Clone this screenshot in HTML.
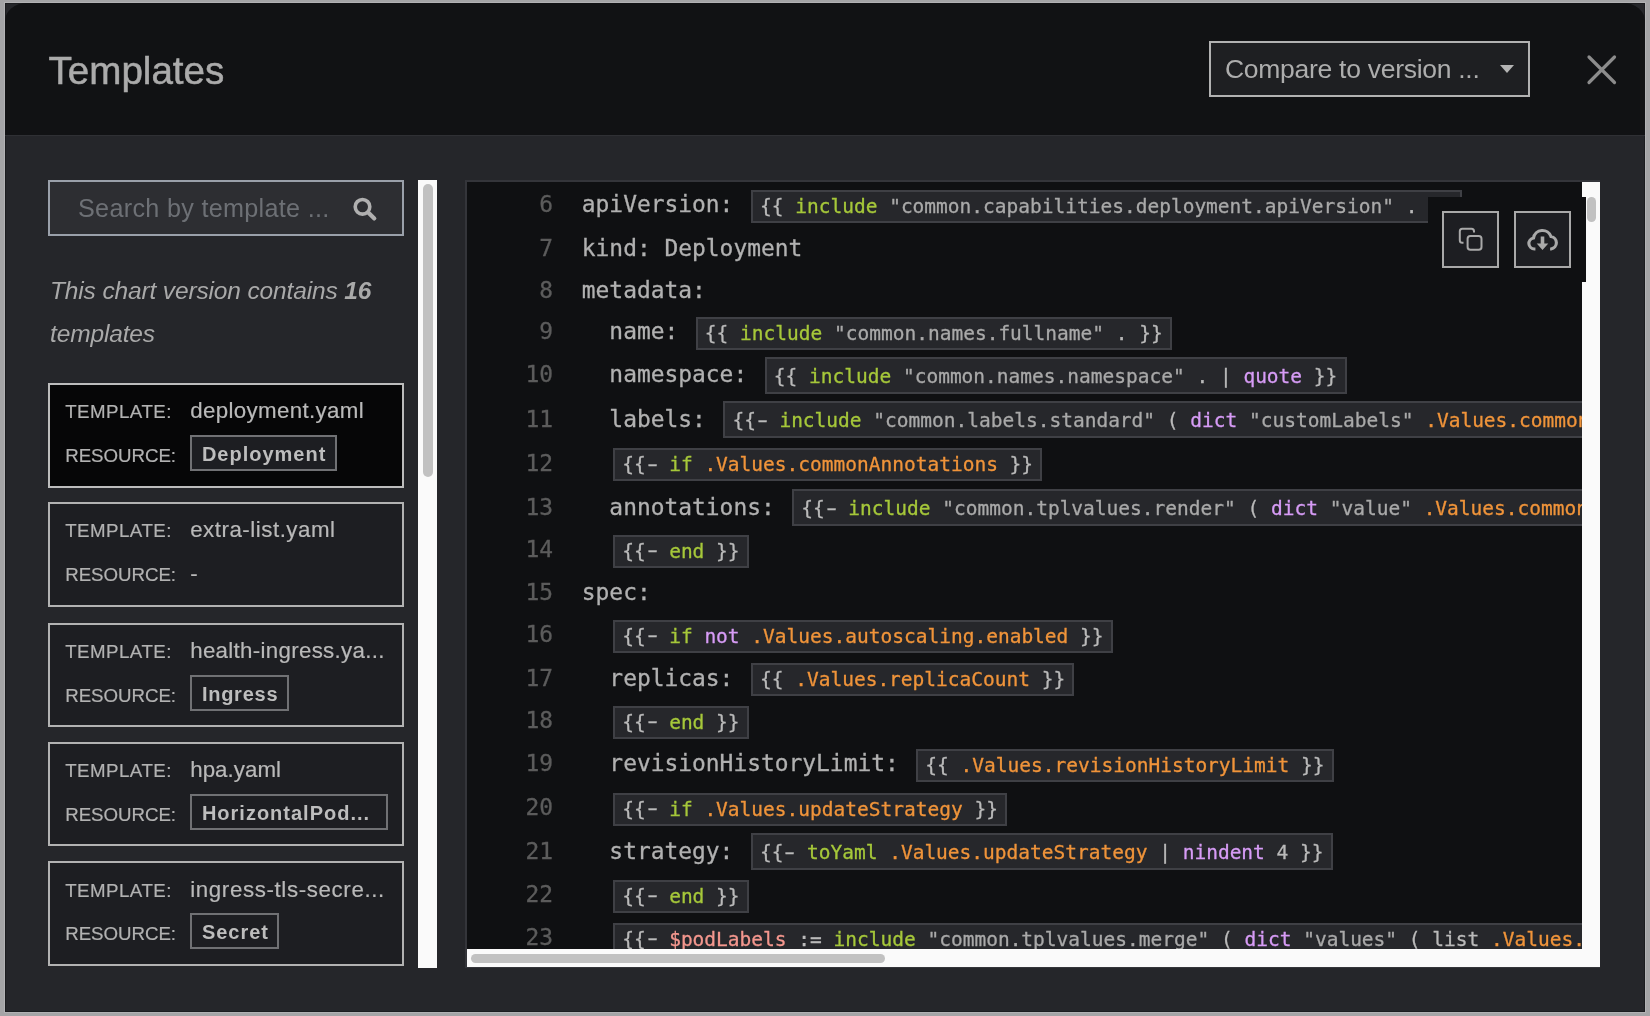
<!DOCTYPE html>
<html lang="en">
<head>
<meta charset="utf-8">
<title>Templates</title>
<style>
html,body{margin:0;padding:0}
body{width:1650px;height:1016px;overflow:hidden;position:relative;background:#a4a4a6;font-family:"Liberation Sans",sans-serif;color:#b4b4b4}
.abs{position:absolute}
.layer{position:absolute;left:0;top:0;width:1650px;height:1016px;will-change:transform}
.modal{position:absolute;left:5.400px;top:3.100px;width:1639.500px;height:1008.700px;background:#25262a;box-shadow:0 0 0 1px #b2b2b4,inset 0 0 0 1px #1b1c1f}
.header{position:absolute;left:0;top:0;width:1639.500px;height:131.900px;background:#111214;border-radius:22px 22px 0 0 / 18px 18px 0 0;border-bottom:1.600px solid #2f3034}
.title{position:absolute;left:48.500px;top:47.600px;font-size:38.600px;line-height:46px;color:#ababab;-webkit-text-stroke:0.5px #ababab;white-space:nowrap}
.select{position:absolute;left:1209px;top:41px;width:317px;height:52px;border:2px solid #b2b2b2;background:#1e1f22}
.select span{position:absolute;left:14px;top:11px;font-size:26.5px;line-height:30px;color:#adadad;white-space:nowrap;letter-spacing:-.28px}
.caret{position:absolute;left:1499.5px;top:65px;width:0;height:0;border-left:7.2px solid transparent;border-right:7.2px solid transparent;border-top:8px solid #b4b4b4}
.close{position:absolute;left:1584px;top:51.5px}
.search{position:absolute;left:48px;top:180px;width:352px;height:52px;border:2px solid #9aa0aa;background:#2d2e32}
.search span{position:absolute;left:28px;top:11.300px;font-size:25.200px;line-height:30px;color:#6d7075;white-space:nowrap;letter-spacing:.3px}
.search svg{position:absolute;left:301.500px;top:13.600px}
.info{position:absolute;left:50px;top:269.1px;font-size:24.5px;line-height:43.2px;font-style:italic;color:#a9a9a9;white-space:nowrap;letter-spacing:-.14px}
.strack{position:absolute;left:418px;top:180px;width:19px;height:788px;background:#fafafa}
.sthumb{position:absolute;left:423.200px;top:183.900px;width:9.700px;height:293px;border-radius:5px;background:#c1c1c1}
.card{position:absolute;left:48.200px;width:352px;height:100.600px;border:2px solid #b2b2b2;background:#1d1e22}
.card.act{background:#060607;border-color:#bcbcbc}
.row{position:absolute;left:15px;white-space:nowrap}
.r1{top:13.200px;height:30px;line-height:30px}
.r2{top:57px;height:30px;line-height:30px}
.lab{position:absolute;left:0;top:-1px;font-size:18.7px;color:#b2b2b2}
.lab,.nm,.dash{-webkit-text-stroke:.2px currentColor}
.l1{letter-spacing:.47px}.l2{letter-spacing:-.03px}
.nm{position:absolute;left:125px;top:-2px;font-size:22.3px;color:#b9b9b9}
.dash{position:absolute;left:125px;top:-2px;font-size:22.3px;color:#b9b9b9}
.badge{position:absolute;left:125px;top:-7px;height:32px;line-height:35px;border:2px solid #707174;background:#1d1e22;padding:0 0 0 9.7px;font-size:20px;font-weight:bold;color:#bdbdbd;box-sizing:content-box}
.card.act .badge{background:#1d1e22}
.codewrap{position:absolute;left:465px;top:180px;width:1135px;height:788px;background:#0f1012;border:2px solid #34353a;box-sizing:border-box}
.code{position:absolute;left:467px;top:182px;width:1115px;height:767px;overflow:hidden;background:#0f1012;font-family:"DejaVu Sans Mono","Liberation Mono",monospace;font-size:22.9px;color:#b1b1b1;-webkit-text-stroke:.3px}
.ln{position:absolute;left:0;height:42px;line-height:42px;white-space:pre;width:3000px}
.no{position:absolute;left:0;width:86px;text-align:right;color:#5c5c5c}
.tx{position:absolute;left:114.8px}
.tb{font-size:19.5px;padding:2.5px 7.2px 3.5px;border:2px solid #3f4045;background:#26272b;margin-left:3.6px;color:#bababa}
.tb.tall{padding-top:5.7px;padding-bottom:4.2px}
.hy{display:inline-block;transform:translateX(.8px) scaleX(1.55)}
.g{color:#a6c83a}.p{color:#d79cf6}.o{color:#f0943a}.r{color:#f4978e}.s{color:#a9a9a9}
.vtrack{position:absolute;left:1582px;top:182px;width:18.100px;height:785px;background:#fafafa}
.vthumb{position:absolute;left:1587.3px;top:196.5px;width:8.8px;height:25.2px;border-radius:4.4px;background:#c1c1c1}
.htrack{position:absolute;left:467px;top:949px;width:1133.100px;height:18px;background:#fafafa}
.hthumb{position:absolute;left:470.5px;top:954px;width:414px;height:9px;border-radius:4.5px;background:#c1c1c1}
.btns{position:absolute;left:1428px;top:196.5px;width:157.6px;height:85.5px;background:#0f1012}
.btn{position:absolute;top:210.8px;width:53.400px;height:53.400px;border:2px solid #a9a9a9;background:#1d1e22}
</style>
</head>
<body>
<div class="modal"></div>
<div class="layer">
<div class="abs header" style="left:5.400px;top:3.100px"></div>
<div class="title">Templates</div>
<div class="select"><span>Compare to version ...</span></div>
<div class="caret"></div>
<svg class="close" width="36" height="36" viewBox="0 0 36 36"><path d="M5 5 L30.500 30.500 M30.500 5 L5 30.500" stroke="#8c8c8c" stroke-width="3.2" fill="none" stroke-linecap="round"/></svg>

<div class="search"><span>Search by template ...</span>
<svg width="28" height="28" viewBox="0 0 28 28"><circle cx="10.500" cy="10.800" r="7.300" fill="none" stroke="#b0b0b0" stroke-width="3.600"/><path d="M16.500 16.800 L22.300 22.400" stroke="#b0b0b0" stroke-width="4.2" stroke-linecap="round"/></svg>
</div>
<div class="info">This chart version contains <b>16</b><br>templates</div>
<div class="strack"></div><div class="sthumb"></div>
<div class="card act" style="top:383.0px">
<div class="row r1"><span class="lab l1">TEMPLATE:</span><span class="nm" style="letter-spacing:0.35px">deployment.yaml</span></div>
<div class="row r2"><span class="lab l2">RESOURCE:</span><span class="badge" style="letter-spacing:1.00px;width:132.9px;">Deployment</span></div>
</div>
<div class="card" style="top:502.3px">
<div class="row r1"><span class="lab l1">TEMPLATE:</span><span class="nm" style="letter-spacing:0.52px">extra-list.yaml</span></div>
<div class="row r2"><span class="lab l2">RESOURCE:</span><span class="dash">-</span></div>
</div>
<div class="card" style="top:622.5px">
<div class="row r1"><span class="lab l1">TEMPLATE:</span><span class="nm" style="letter-spacing:0.31px">health-ingress.ya...</span></div>
<div class="row r2"><span class="lab l2">RESOURCE:</span><span class="badge" style="letter-spacing:0.75px;width:85.2px;">Ingress</span></div>
</div>
<div class="card" style="top:741.6px">
<div class="row r1"><span class="lab l1">TEMPLATE:</span><span class="nm" style="letter-spacing:0.05px">hpa.yaml</span></div>
<div class="row r2"><span class="lab l2">RESOURCE:</span><span class="badge" style="letter-spacing:1.00px;width:184.3px;">HorizontalPod...</span></div>
</div>
<div class="card" style="top:861.4px">
<div class="row r1"><span class="lab l1">TEMPLATE:</span><span class="nm" style="letter-spacing:0.63px">ingress-tls-secre...</span></div>
<div class="row r2"><span class="lab l2">RESOURCE:</span><span class="badge" style="letter-spacing:1.00px;width:75.4px;">Secret</span></div>
</div>

<div class="codewrap"></div>
<div class="code">
<div class="ln" style="top:1.4px"><span class="no">6</span><span class="tx">apiVersion: <span class="tb">{{ <span class="g">include</span> <span class="s">"common.capabilities.deployment.apiVersion"</span> . }}</span></span></div>
<div class="ln" style="top:44.6px"><span class="no">7</span><span class="tx">kind: Deployment</span></div>
<div class="ln" style="top:86.6px"><span class="no">8</span><span class="tx">metadata:</span></div>
<div class="ln" style="top:128.0px"><span class="no">9</span><span class="tx">  name: <span class="tb">{{ <span class="g">include</span> <span class="s">"common.names.fullname"</span> . }}</span></span></div>
<div class="ln" style="top:171.4px"><span class="no">10</span><span class="tx">  namespace: <span class="tb tall">{{ <span class="g">include</span> <span class="s">"common.names.namespace"</span> . | <span class="p">quote</span> }}</span></span></div>
<div class="ln" style="top:216.0px"><span class="no">11</span><span class="tx">  labels: <span class="tb tall">{{<span class="hy">-</span> <span class="g">include</span> <span class="s">"common.labels.standard"</span> ( <span class="p">dict</span> <span class="s">"customLabels"</span> <span class="o">.Values.commonLabels</span> <span class="s">"context"</span> $ ) | <span class="p">nindent</span> 4 }}</span></span></div>
<div class="ln" style="top:259.6px"><span class="no">12</span><span class="tx">  <span class="tb">{{<span class="hy">-</span> <span class="g">if</span> <span class="o">.Values.commonAnnotations</span> }}</span></span></div>
<div class="ln" style="top:303.6px"><span class="no">13</span><span class="tx">  annotations: <span class="tb tall">{{<span class="hy">-</span> <span class="g">include</span> <span class="s">"common.tplvalues.render"</span> ( <span class="p">dict</span> <span class="s">"value"</span> <span class="o">.Values.commonAnnotations</span> <span class="s">"context"</span> $ ) | <span class="p">nindent</span> 4 }}</span></span></div>
<div class="ln" style="top:346.4px"><span class="no">14</span><span class="tx">  <span class="tb">{{<span class="hy">-</span> <span class="g">end</span> }}</span></span></div>
<div class="ln" style="top:389.4px"><span class="no">15</span><span class="tx">spec:</span></div>
<div class="ln" style="top:431.0px"><span class="no">16</span><span class="tx">  <span class="tb">{{<span class="hy">-</span> <span class="g">if</span> <span class="p">not</span> <span class="o">.Values.autoscaling.enabled</span> }}</span></span></div>
<div class="ln" style="top:474.6px"><span class="no">17</span><span class="tx">  replicas: <span class="tb">{{ <span class="o">.Values.replicaCount</span> }}</span></span></div>
<div class="ln" style="top:517.0px"><span class="no">18</span><span class="tx">  <span class="tb">{{<span class="hy">-</span> <span class="g">end</span> }}</span></span></div>
<div class="ln" style="top:560.0px"><span class="no">19</span><span class="tx">  revisionHistoryLimit: <span class="tb">{{ <span class="o">.Values.revisionHistoryLimit</span> }}</span></span></div>
<div class="ln" style="top:604.0px"><span class="no">20</span><span class="tx">  <span class="tb">{{<span class="hy">-</span> <span class="g">if</span> <span class="o">.Values.updateStrategy</span> }}</span></span></div>
<div class="ln" style="top:647.6px"><span class="no">21</span><span class="tx">  strategy: <span class="tb tall">{{<span class="hy">-</span> <span class="g">toYaml</span> <span class="o">.Values.updateStrategy</span> | <span class="p">nindent</span> 4 }}</span></span></div>
<div class="ln" style="top:691.0px"><span class="no">22</span><span class="tx">  <span class="tb">{{<span class="hy">-</span> <span class="g">end</span> }}</span></span></div>
<div class="ln" style="top:734.0px"><span class="no">23</span><span class="tx">  <span class="tb">{{<span class="hy">-</span> <span class="r">$podLabels</span> := <span class="g">include</span> <span class="s">"common.tplvalues.merge"</span> ( <span class="p">dict</span> <span class="s">"values"</span> ( list <span class="o">.Values.podLabels</span> <span class="o">.Values.commonLabels</span> ) <span class="s">"context"</span> . ) }}</span></span></div>
</div>
<div class="vtrack"></div><div class="vthumb"></div>
<div class="htrack"></div><div class="hthumb"></div>
<div class="btns"></div>
<div class="btn" style="left:1442px">
<svg width="53" height="53" viewBox="0 0 53 53" style="position:absolute;left:0;top:0"><path d="M19.500 29.700 h-1.200 a2.500 2.500 0 0 1 -2.500 -2.500 v-8.900 a2.500 2.500 0 0 1 2.500 -2.500 h9.200 a2.500 2.500 0 0 1 2.500 2.500 v1.200" fill="none" stroke="#a9a9a9" stroke-width="2"/><rect x="23.600" y="23" width="13.900" height="13.800" rx="2.800" fill="none" stroke="#a9a9a9" stroke-width="2"/></svg>
</div>
<div class="btn" style="left:1514px">
<svg width="53" height="53" viewBox="0 0 53 53" style="position:absolute;left:0;top:0"><g transform="translate(26.500 37.300) scale(0.947 0.920) translate(-26.470 -37.470)"><path d="M19 36 h-1 a6 6 0 0 1 -1 -11.900 a9.500 9.500 0 0 1 18.500 -1.500 a6.800 6.800 0 0 1 0 13.400 h-1" fill="none" stroke="#a9a9a9" stroke-width="3.300"/></g><path d="M24.700 23.600 h3.600 v7 h4 l-5.800 6.500 l-5.800 -6.500 h4 z" fill="#a9a9a9"/></svg>
</div>
</body>
</html>
